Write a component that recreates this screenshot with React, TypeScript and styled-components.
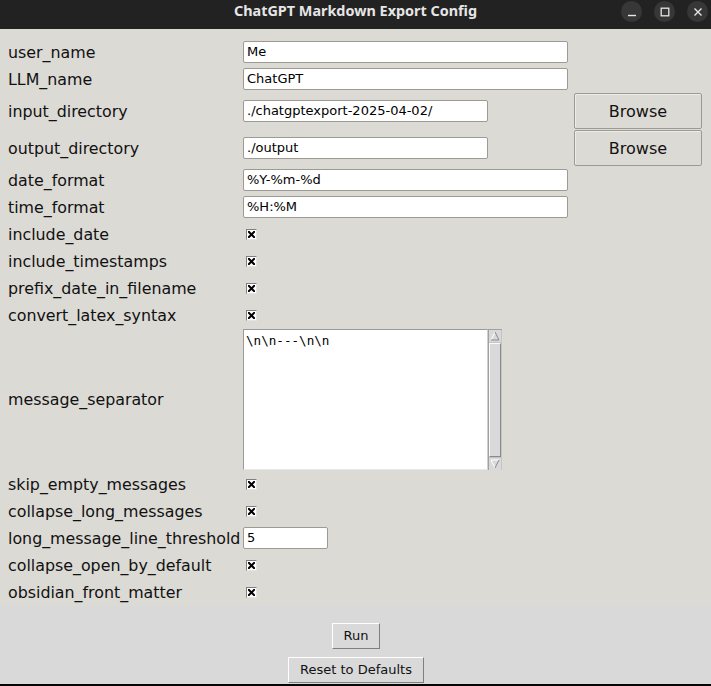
import React from "react";
import styled, { createGlobalStyle } from "styled-components";

const Global = createGlobalStyle`
  html, body { margin: 0; padding: 0; background: #d9d9d9; overflow: hidden; }
  #root { width: 711px; height: 686px; }
`;

const Window = styled.div`
  width: 711px;
  height: 686px;
  display: flex;
  flex-direction: column;
  background: #d9d9d9;
  font-family: "DejaVu Sans", sans-serif;
  color: #000;
  overflow: hidden;
`;

const TitleBar = styled.div`
  flex: none;
  height: 29px;
  background: #222222;
  display: grid;
  grid-template-columns: 1fr auto 1fr;
  align-items: start;
`;

const Title = styled.div`
  grid-column: 2;
  font-family: "Noto Sans", "DejaVu Sans", sans-serif;
  font-weight: 700;
  font-size: 14.4px;
  line-height: 22px;
  color: #e6e6e6;
  white-space: nowrap;
`;

const Controls = styled.div`
  grid-column: 3;
  justify-self: end;
  display: flex;
  gap: 12px;
  padding: 1px 3px 0 0;
`;

const CircleBtn = styled.div`
  width: 21px;
  height: 21px;
  border-radius: 50%;
  background: #373737;
  display: flex;
  align-items: center;
  justify-content: center;
`;

const Form = styled.div`
  flex: none;
  background: #dcdad5;
  padding: 9.5px 0 0 8px;
`;

const Row = styled.div<{ $h: number; $top?: boolean }>`
  display: grid;
  grid-template-columns: 235px 331px 128px;
  height: ${(p) => p.$h}px;
  align-items: ${(p) => (p.$top ? "start" : "center")};
`;

const Label = styled.div`
  font-size: 15.85px;
  line-height: 19px;
  white-space: nowrap;
  color: #111;
  align-self: center;
`;

const Entry = styled.div<{ $w: number }>`
  width: ${(p) => p.$w}px;
  height: 22px;
  box-sizing: border-box;
  background: #fff;
  border: 1px solid #9e9a91;
  border-radius: 2px;
  font-size: 13px;
  line-height: 20px;
  padding: 0 3px;
  white-space: nowrap;
  overflow: hidden;
`;

const BrowseButton = styled.div`
  width: 128px;
  height: 36px;
  box-sizing: border-box;
  background: #dcdad5;
  border: 1px solid #9e9a91;
  border-radius: 2px;
  box-shadow: inset 1px 1px 0 #eeece8;
  font-size: 16px;
  display: flex;
  align-items: center;
  justify-content: center;
  color: #111;
`;

const CheckBox = styled.div`
  width: 11px;
  height: 11px;
  margin: 1px 0 0 3px;
  box-sizing: border-box;
  background: #fff;
  border-top: 1px solid #7f7f7f;
  border-left: 1px solid #7f7f7f;
  border-right: 1px solid #e4e4e4;
  border-bottom: 1px solid #e4e4e4;
  display: flex;
  align-items: center;
  justify-content: center;
`;

const TextWrap = styled.div`
  display: flex;
  margin-top: 0.5px;
`;

const TextBox = styled.div`
  width: 245px;
  height: 141px;
  box-sizing: border-box;
  background: #fff;
  border-top: 1px solid #9a9a9a;
  border-left: 1px solid #9a9a9a;
  border-right: 1px solid #d0d0d0;
  border-bottom: 1px solid #e8e8e8;
  font-family: "DejaVu Sans Mono", monospace;
  font-size: 12.6px;
  line-height: 15px;
  padding: 3px 2px;
  white-space: pre;
`;

const Scrollbar = styled.div`
  width: 14px;
  height: 141px;
  box-sizing: border-box;
  background: #c4c4c4;
  border-top: 1px solid #a0a0a0;
  border-left: 1px solid #a0a0a0;
  display: flex;
  flex-direction: column;
  padding: 0 1px 0 0;
`;

const ScrollArrow = styled.div`
  height: 12px;
  flex: none;
  display: flex;
  align-items: center;
  justify-content: center;
  background: #d9d9d9;
`;

const ScrollThumb = styled.div`
  flex: 1;
  margin: 1px 0;
  background: #d9d9d9;
  border-top: 1px solid #fafafa;
  border-left: 1px solid #fafafa;
  border-right: 1px solid #8a8a8a;
  border-bottom: 1px solid #8a8a8a;
`;

const Footer = styled.div`
  flex: none;
  display: flex;
  flex-direction: column;
  align-items: center;
  gap: 8px;
  padding: 17px 0 1px 1px;
`;

const TkButton = styled.div`
  height: 26px;
  box-sizing: border-box;
  padding: 0 11px;
  background: #d9d9d9;
  border-top: 1px solid #ffffff;
  border-left: 1px solid #ffffff;
  border-right: 1px solid #7f7f7f;
  border-bottom: 1px solid #7f7f7f;
  font-size: 13px;
  line-height: 24px;
  color: #111;
  white-space: nowrap;
`;

const BottomStrip = styled.div`
  flex: 1;
  background: #050505;
`;

const XMark = () => (
  <svg width="7" height="7" viewBox="0 0 7 7">
    <path d="M0.8 0.8 L6.2 6.2 M6.2 0.8 L0.8 6.2" stroke="#000" strokeWidth="2" strokeLinecap="square" />
  </svg>
);

const Check = () => (
  <CheckBox>
    <XMark />
  </CheckBox>
);

const Arrow = ({ up }: { up?: boolean }) => (
  <svg width="10" height="10" viewBox="0 0 10 10">
    {up ? (
      <>
        <path d="M5 1 L1 9 L9 9 Z" fill="#d9d9d9" />
        <path d="M1 9 L5 1" stroke="#ffffff" strokeWidth="1" />
        <path d="M5 1 L9 9 L1 9" stroke="#8a8a8a" strokeWidth="1" fill="none" />
      </>
    ) : (
      <>
        <path d="M1 1 L9 1 L5 9 Z" fill="#d9d9d9" />
        <path d="M1 1 L9 1 M1 1 L5 9" stroke="#ffffff" strokeWidth="1" />
        <path d="M9 1 L5 9" stroke="#8a8a8a" strokeWidth="1" fill="none" />
      </>
    )}
  </svg>
);

type Field =
  | { kind: "entry"; label: string; value: string; w: number }
  | { kind: "dir"; label: string; value: string }
  | { kind: "check"; label: string }
  | { kind: "text"; label: string; value: string };

const fields: Field[] = [
  { kind: "entry", label: "user_name", value: "Me", w: 325 },
  { kind: "entry", label: "LLM_name", value: "ChatGPT", w: 325 },
  { kind: "dir", label: "input_directory", value: "./chatgptexport-2025-04-02/" },
  { kind: "dir", label: "output_directory", value: "./output" },
  { kind: "entry", label: "date_format", value: "%Y-%m-%d", w: 325 },
  { kind: "entry", label: "time_format", value: "%H:%M", w: 325 },
  { kind: "check", label: "include_date" },
  { kind: "check", label: "include_timestamps" },
  { kind: "check", label: "prefix_date_in_filename" },
  { kind: "check", label: "convert_latex_syntax" },
  { kind: "text", label: "message_separator", value: "\\n\\n---\\n\\n" },
  { kind: "check", label: "skip_empty_messages" },
  { kind: "check", label: "collapse_long_messages" },
  { kind: "entry", label: "long_message_line_threshold", value: "5", w: 85 },
  { kind: "check", label: "collapse_open_by_default" },
  { kind: "check", label: "obsidian_front_matter" },
];

const renderField = (f: Field) => {
  switch (f.kind) {
    case "entry":
      return (
        <Row $h={27} key={f.label}>
          <Label>{f.label}</Label>
          <Entry $w={f.w}>{f.value}</Entry>
        </Row>
      );
    case "dir":
      return (
        <Row $h={37} key={f.label}>
          <Label>{f.label}</Label>
          <Entry $w={245}>{f.value}</Entry>
          <BrowseButton>Browse</BrowseButton>
        </Row>
      );
    case "check":
      return (
        <Row $h={27} key={f.label}>
          <Label>{f.label}</Label>
          <Check />
        </Row>
      );
    case "text":
      return (
        <Row $h={142} $top key={f.label}>
          <Label>{f.label}</Label>
          <TextWrap>
            <TextBox>{f.value}</TextBox>
            <Scrollbar>
              <ScrollArrow>
                <Arrow up />
              </ScrollArrow>
              <ScrollThumb />
              <ScrollArrow>
                <Arrow />
              </ScrollArrow>
            </Scrollbar>
          </TextWrap>
        </Row>
      );
  }
};

export default function App() {
  return (
    <>
      <Global />
      <Window>
        <TitleBar>
          <Title>ChatGPT Markdown Export Config</Title>
          <Controls>
            <CircleBtn>
              <svg width="10" height="10" viewBox="0 0 10 10">
                <path d="M1 8.5 L9 8.5" stroke="#e6e6e6" strokeWidth="1.4" />
              </svg>
            </CircleBtn>
            <CircleBtn>
              <svg width="10" height="10" viewBox="0 0 10 10">
                <rect x="1.2" y="1.2" width="7.6" height="7.6" fill="none" stroke="#e6e6e6" strokeWidth="1.3" />
              </svg>
            </CircleBtn>
            <CircleBtn>
              <svg width="10" height="10" viewBox="0 0 10 10">
                <path d="M1.5 1.5 L8.5 8.5 M8.5 1.5 L1.5 8.5" stroke="#e6e6e6" strokeWidth="1.4" />
              </svg>
            </CircleBtn>
          </Controls>
        </TitleBar>
        <Form>{fields.map(renderField)}</Form>
        <Footer>
          <TkButton>Run</TkButton>
          <TkButton>Reset to Defaults</TkButton>
        </Footer>
        <BottomStrip />
      </Window>
    </>
  );
}
